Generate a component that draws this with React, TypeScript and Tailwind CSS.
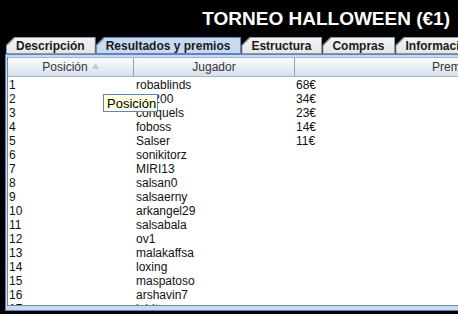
const rows: [string, string, string][] = [
  ["1", "robablinds", "68€"],
  ["2", "billi200", "34€"],
  ["3", "conquels", "23€"],
  ["4", "foboss", "14€"],
  ["5", "Salser", "11€"],
  ["6", "sonikitorz", ""],
  ["7", "MIRI13", ""],
  ["8", "salsan0", ""],
  ["9", "salsaerny", ""],
  ["10", "arkangel29", ""],
  ["11", "salsabala", ""],
  ["12", "ov1", ""],
  ["13", "malakaffsa", ""],
  ["14", "loxing", ""],
  ["15", "maspatoso", ""],
  ["16", "arshavin7", ""],
  ["17", "lobito", ""],
];

const tabs = ["Descripción", "Resultados y premios", "Estructura", "Compras", "Información"];

const Tab = ({ label, active }: { label: string; active: boolean }) => (
  <div
    className={
      "h-[17px] shrink-0 p-px [clip-path:polygon(8px_0,100%_0,100%_100%,0_100%,0_8px)] " +
      (active ? "bg-[#6382bf]" : "bg-[#8a99a8]")
    }
  >
    <div
      className={
        "flex h-full items-center pl-[9px] pr-[10px] text-[12px] font-bold leading-none text-[#1a1a1a] [clip-path:polygon(8px_0,100%_0,100%_100%,0_100%,0_8px)] " +
        (active ? "bg-[#c8daf0]" : "bg-gradient-to-b from-[#f4f4f4] to-[#e6e6e6]")
      }
    >
      {label}
    </div>
  </div>
);

export default function App() {
  return (
    <div
      className="relative flex h-[314px] w-[458px] flex-col overflow-hidden bg-black"
      style={{ fontFamily: '"Liberation Sans", Arial, sans-serif' }}
    >
      <div className="h-[37px] shrink-0 whitespace-nowrap pr-[8px] pt-[8px] text-right text-[19px] font-bold leading-[22px] text-white">
        TORNEO HALLOWEEN (€1)
      </div>

      <div className="flex h-[17px] shrink-0 pl-[6px]">
        {tabs.map((t, i) => (
          <Tab key={t} label={t} active={i === 1} />
        ))}
      </div>

      <div className="ml-[5px] flex h-[257px] w-[620px] shrink-0 flex-col border-y border-l border-[#6382bf] bg-[#c8daf0] pb-[4px] pl-px pt-[2px]">
        <div className="flex min-h-0 flex-1 flex-col border-l border-b border-[#7a8a99] bg-white">
          <div className="flex h-[20px] shrink-0 border-y border-[#a3b8cc] bg-gradient-to-b from-white to-[#d5e0ec] text-[12px] leading-[18px] text-[#333]">
            <div className="flex w-[126px] items-center justify-center gap-[4px] border-r border-[#8da2b8]">
              <span>Posición</span>
              <svg width="7" height="6" viewBox="0 0 7 6" className="mt-[-2px]">
                <polygon points="3.5,0 7,6 0,6" fill="#c3ccd6" />
              </svg>
            </div>
            <div className="w-[161px] border-r border-[#8da2b8] text-center">Jugador</div>
            <div className="w-[312px] text-center">Premio</div>
          </div>
          <div className="min-h-0 flex-1 overflow-hidden pt-px text-[12px] leading-[14px] text-[#111]">
            {rows.map(([pos, name, prize]) => (
              <div key={pos} className="flex h-[14px]">
                <div className="w-[126px] pl-px">{pos}</div>
                <div className="w-[161px] pl-[2px]">{name}</div>
                <div className="w-[312px] pl-px">{prize}</div>
              </div>
            ))}
          </div>
        </div>
      </div>

      <div className="absolute left-[103px] top-[94px] flex h-[18px] w-[55px] items-center border border-[#6382bf] bg-[#ffffe1] pl-[3px] text-[13px] leading-none text-black">
        Posición
      </div>
    </div>
  );
}
